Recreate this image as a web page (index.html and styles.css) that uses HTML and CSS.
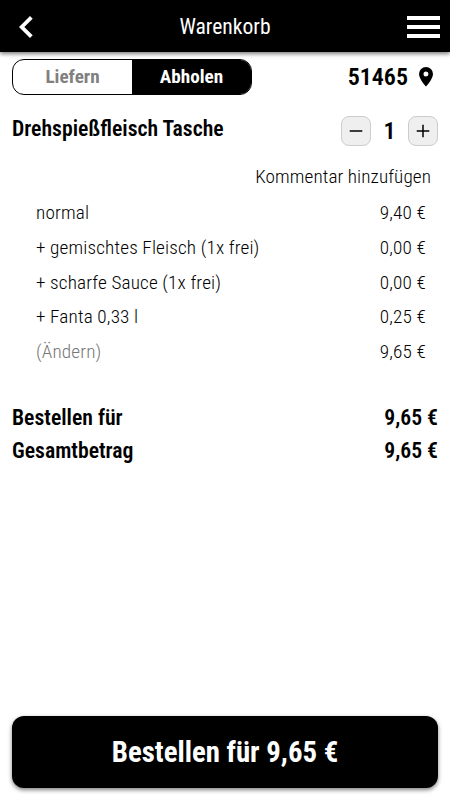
FILE: index.html
```html
<!DOCTYPE html>
<html lang="de">
<head>
<meta charset="utf-8">
<title>Warenkorb</title>
<link rel="stylesheet" href="styles.css">
</head>
<body>
<header class="topbar">
  <svg class="back" width="14" height="22" viewBox="0 0 14 22"><path d="M11 0 13.7 2.7 5.3 11l8.4 8.3L11 22 0 11z" fill="#fff"/></svg>
  <h1 class="title">Warenkorb</h1>
  <svg class="menu" width="33" height="22" viewBox="0 0 33 22"><path d="M0 2h33M0 11h33M0 20h33" stroke="#fff" stroke-width="4"/></svg>
</header>
<main class="cart">
  <div class="delivery">
    <div class="switch"><span class="option">Liefern</span><span class="option active">Abholen</span></div>
    <div class="zip"><span>51465</span><svg width="14" height="20" viewBox="0 0 14 20"><path d="M7 0a7 7 0 0 0-7 7c0 5 7 12.6 7 12.6s7-7.6 7-12.6a7 7 0 0 0-7-7zm0 9.5a2.5 2.5 0 1 1 0-5 2.5 2.5 0 0 1 0 5z"/></svg></div>
  </div>
  <div class="product">
    <h2 class="name">Drehspießfleisch Tasche</h2>
    <div class="stepper">
      <button class="step"><svg width="14" height="14" viewBox="0 0 14 14"><path d="M.7 7h12.6" stroke="#000" stroke-width="1.5"/></svg></button>
      <span class="count">1</span>
      <button class="step"><svg width="14" height="14" viewBox="0 0 14 14"><path d="M.7 7h12.6M7 .7v12.6" stroke="#000" stroke-width="1.5"/></svg></button>
    </div>
  </div>
  <div class="comment">Kommentar hinzufügen</div>
  <ul class="items">
    <li><span>normal</span><span>9,40 €</span></li>
    <li><span>+ gemischtes Fleisch (1x frei)</span><span>0,00 €</span></li>
    <li><span>+ scharfe Sauce (1x frei)</span><span>0,00 €</span></li>
    <li><span>+ Fanta 0,33 l</span><span>0,25 €</span></li>
    <li><span class="edit">(Ändern)</span><span>9,65 €</span></li>
  </ul>
  <div class="totals">
    <div class="total"><span>Bestellen für</span><span>9,65 €</span></div>
    <div class="total"><span>Gesamtbetrag</span><span>9,65 €</span></div>
  </div>
  <button class="order">Bestellen für 9,65 €</button>
</main>
</body>
</html>
```

FILE: styles.css
```css
* { box-sizing: border-box; }
body {
  margin: 0;
  height: 800px;
  display: flex;
  flex-direction: column;
  background: #fff;
  color: #000;
  font-family: "Roboto Condensed", Roboto, sans-serif;
}
svg { display: block; }
.topbar {
  height: 52px;
  flex: none;
  padding: 2px 10px 0 19px;
  display: grid;
  grid-template-columns: 42px 1fr 51px;
  align-items: center;
  background: #000;
  color: #fff;
  box-shadow: 0 2px 4px rgba(0, 0, 0, .5);
}
.menu { justify-self: end; }
.title { margin: 0; font-size: 21.6px; font-weight: 400; line-height: 26px; text-align: center; }
.cart { flex: 1; display: flex; flex-direction: column; padding: 7px 12px 12px; }
.delivery { height: 36px; display: flex; justify-content: space-between; }
.switch {
  width: 240px;
  display: flex;
  border: 1px solid #000;
  border-radius: 12px;
  overflow: hidden;
}
.option { flex: 1; font-size: 19.2px; font-weight: 700; line-height: 34px; text-align: center; color: #808080; }
.active { background: #000; color: #fff; }
.zip { display: flex; align-items: center; gap: 11px; padding-right: 5px; font-size: 24px; font-weight: 600; }
.product { display: flex; justify-content: space-between; margin-top: 20px; }
.name { margin: 0; font-size: 21.7px; font-weight: 600; line-height: 28px; }
.stepper { display: flex; align-items: center; gap: 12px; margin-top: 1px; }
.step {
  width: 30px;
  height: 30px;
  padding: 0;
  display: flex;
  align-items: center;
  justify-content: center;
  border: 1px solid #ccc;
  border-radius: 8px;
  background: #efefef;
}
.count { width: 13px; font-size: 24px; font-weight: 600; line-height: 30px; text-align: center; }
.comment { margin-top: 16px; padding-right: 7px; font-size: 19.2px; font-weight: 360; letter-spacing: .08px; line-height: 30px; text-align: right; }
.items { list-style: none; margin: 4px 0 0; padding: 0 12px 0 24px; font-size: 19.2px; font-weight: 360; letter-spacing: .15px; }
.items li { height: 34.8px; display: flex; justify-content: space-between; line-height: 34px; }
.edit { color: #777; }
.totals { margin-top: 32.4px; font-size: 21.7px; font-weight: 600; line-height: 32.5px; }
.total { display: flex; justify-content: space-between; }
.order {
  height: 72px;
  margin-top: auto;
  border: 0;
  border-radius: 12px;
  background: #000;
  color: #fff;
  font: 700 28.8px "Roboto Condensed", Roboto, sans-serif;
  box-shadow: 0 2px 4px rgba(0, 0, 0, .5);
}
```
